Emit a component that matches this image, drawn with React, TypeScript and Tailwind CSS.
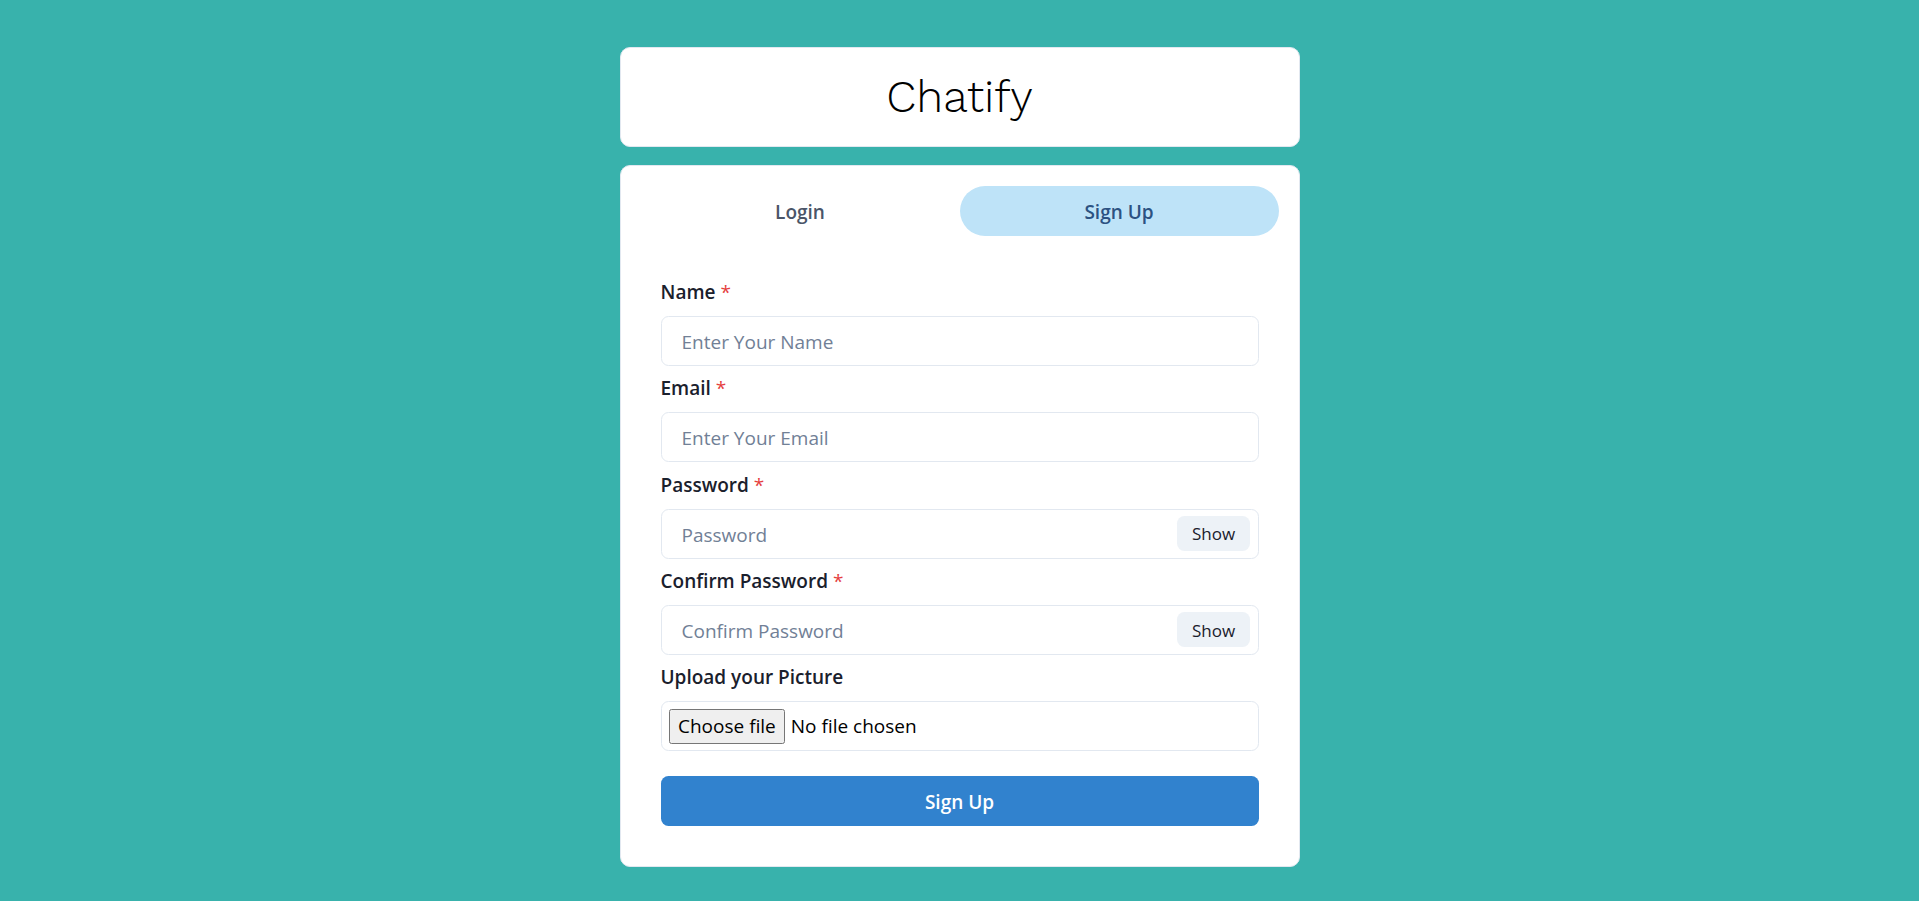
import React, { useState } from 'react';

const font = { fontFamily: '"Segoe UI", "Open Sans", sans-serif' };

const Field = ({
  label,
  required,
  children,
}: {
  label: string;
  required?: boolean;
  children: React.ReactNode;
}) => (
  <div className="w-full">
    <label className="block mb-[10px] pt-[2px] h-[30px] text-[19px] leading-[28px] font-semibold text-[#1A202C]">
      {label}
      {required && <span className="ml-[5px] font-medium text-[#E53E3E]">*</span>}
    </label>
    {children}
  </div>
);

const inputCls =
  'w-full h-[50px] px-[20px] pt-[2px] rounded-[7.5px] border border-[#E2E8F0] bg-white text-[19px] text-[#1A202C] placeholder:text-[#718096] outline-none';

const PasswordInput = ({ placeholder }: { placeholder: string }) => {
  const [show, setShow] = useState(false);
  return (
    <div className="relative w-full">
      <input type={show ? 'text' : 'password'} placeholder={placeholder} className={`${inputCls} pr-[90px]`} />
      <div className="absolute right-0 top-0 h-[50px] w-[90px] flex items-center justify-center">
        <button
          onClick={() => setShow(!show)}
          className="h-[35px] px-[15px] pt-[1px] rounded-[7.5px] bg-[#EDF2F7] text-[17px] font-medium text-[#1A202C]"
        >
          {show ? 'Hide' : 'Show'}
        </button>
      </div>
    </div>
  );
};

export default function App() {
  const [tab, setTab] = useState(1);

  return (
    <div className="min-h-screen w-full bg-[#38B2AC] flex justify-center" style={font}>
      <div className="w-[680px] flex flex-col">
        {/* Header */}
        <div className="mt-[47px] mb-[18px] w-full bg-white rounded-[10px] border border-[#E2E8F0] p-[15px] text-center">
          <h1
            className="text-[45px] leading-[68px] font-light text-black"
            style={{ fontFamily: '"Work Sans", Lato, sans-serif' }}
          >
            Chatify
          </h1>
        </div>

        {/* Auth card */}
        <div className="w-full bg-white rounded-[10px] border border-[#E2E8F0] p-5">
          <div className="flex mb-5">
            {['Login', 'Sign Up'].map((t, i) => (
              <button
                key={t}
                onClick={() => setTab(i)}
                className={`flex-1 h-[50px] pt-[2px] rounded-full text-[19px] font-semibold ${
                  tab === i ? 'bg-[#BEE3F8] text-[#2C5282]' : 'text-[#4A5568]'
                }`}
              >
                {t}
              </button>
            ))}
          </div>

          <div className="p-5 flex flex-col gap-[6.25px]">
            <Field label="Name" required>
              <input placeholder="Enter Your Name" className={inputCls} />
            </Field>
            <Field label="Email" required>
              <input placeholder="Enter Your Email" className={inputCls} />
            </Field>
            <Field label="Password" required>
              <PasswordInput placeholder="Password" />
            </Field>
            <Field label="Confirm Password" required>
              <PasswordInput placeholder="Confirm Password" />
            </Field>
            <Field label="Upload your Picture">
              <div className="w-full h-[50px] px-[7.5px] rounded-[7.5px] border border-[#E2E8F0] flex items-center text-[19px] text-black">
                <span className="h-[35px] px-[8px] pt-[1px] flex items-center border border-[#767676] rounded-[2.5px] bg-[#EFEFEF]">
                  Choose file
                </span>
                <span className="ml-[6px] pt-[1px]">No file chosen</span>
              </div>
            </Field>
            <button className="mt-[18.75px] w-full h-[50px] pt-[2px] rounded-[7.5px] bg-[#3182CE] text-white text-[19px] font-semibold">
              Sign Up
            </button>
          </div>
        </div>
      </div>
    </div>
  );
}
